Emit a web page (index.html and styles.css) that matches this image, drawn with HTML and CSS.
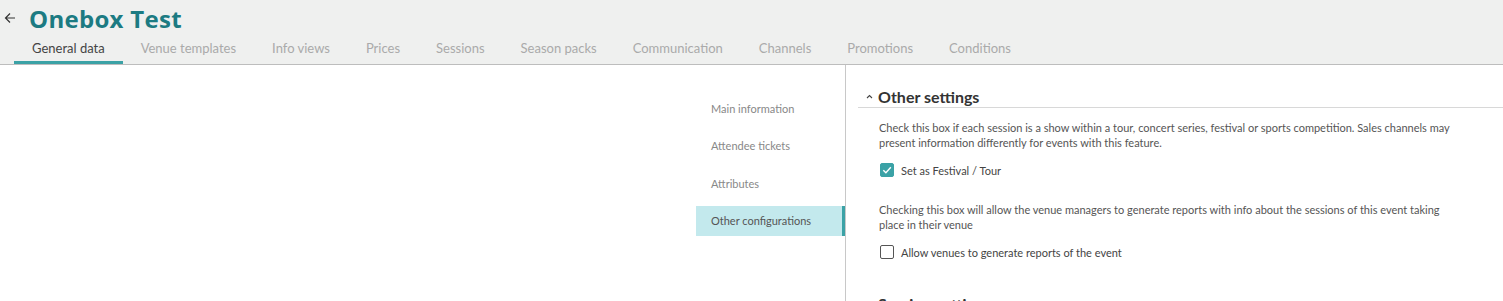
FILE: index.html
```html
<!DOCTYPE html>
<html lang="en">
<head>
  <meta charset="UTF-8" />
  <title>Onebox Test</title>
  <link rel="stylesheet" href="styles.css">
</head>
<body>
  <header class="top">
    <div class="title-row">
      <svg class="back" width="12" height="12" viewBox="0 0 12 12">
        <path d="M11 6H1.5M6 1.5L1.5 6L6 10.5" fill="none" stroke="#333" stroke-width="1.2"/>
      </svg>
      <h1>Onebox Test</h1>
    </div>
    <nav class="tabs">
      <a class="tab active">General data</a>
      <a class="tab">Venue templates</a>
      <a class="tab">Info views</a>
      <a class="tab">Prices</a>
      <a class="tab">Sessions</a>
      <a class="tab">Season packs</a>
      <a class="tab">Communication</a>
      <a class="tab">Channels</a>
      <a class="tab">Promotions</a>
      <a class="tab">Conditions</a>
    </nav>
  </header>

  <div class="page">
    <aside class="side">
      <ul class="side-menu">
        <li>Main information</li>
        <li>Attendee tickets</li>
        <li>Attributes</li>
        <li class="active">Other configurations</li>
      </ul>
    </aside>

    <main class="content">
      <section class="block">
        <h2 class="block-title">
          <svg class="caret" width="7" height="5" viewBox="0 0 7 5"><path d="M1 4L3.5 1.5L6 4" fill="none" stroke="#444" stroke-width="1.1"/></svg>
          Other settings
        </h2>
        <div class="block-body">
          <p>Check this box if each session is a show within a tour, concert series, festival or sports competition. Sales channels may present information differently for events with this feature.</p>
          <label class="check">
            <span class="box checked">
              <svg width="10" height="10" viewBox="0 0 10 10"><path d="M1.3 5.2L3.9 7.7L8.8 2.3" fill="none" stroke="#fff" stroke-width="1.4"/></svg>
            </span>
            Set as Festival / Tour
          </label>

          <p>Checking this box will allow the venue managers to generate reports with info about the sessions of this event taking place in their venue</p>
          <label class="check">
            <span class="box"></span>
            Allow venues to generate reports of the event
          </label>
        </div>
      </section>

      <section class="block">
        <h2 class="block-title next">Session settings</h2>
      </section>
    </main>
  </div>
</body>
</html>
```

FILE: styles.css
```css
* {
  box-sizing: border-box;
}

html, body {
  margin: 0;
  padding: 0;
  height: 100vh;
  overflow: hidden;
  background: #fff;
  font-family: 'Lato', sans-serif;
  color: #555;
}

.top {
  background: #eff0ef;
  border-bottom: 1px solid #bdbdbd;
  height: 65px;
}

.title-row {
  display: flex;
  align-items: center;
  height: 36px;
  padding-left: 4px;
}

.back {
  margin-right: 13px;
}

h1 {
  margin: 0;
  font-family: 'Open Sans', sans-serif;
  font-weight: 700;
  font-size: 24px;
  color: #1c7b82;
  letter-spacing: 0.3px;
}

.tabs {
  display: flex;
  padding-left: 14px;
  height: 28px;
}

.tab {
  display: flex;
  align-items: center;
  padding: 0 18px 1px;
  font-size: 13px;
  color: #aaa;
  border-bottom: 3px solid transparent;
}

.tab.active {
  color: #444;
  border-bottom-color: #3ba2a6;
}

.page {
  display: flex;
  height: calc(100vh - 65px);
}

.side {
  width: 846px;
  padding-left: 696px;
  border-right: 1px solid #c8c8c8;
}

.side-menu {
  list-style: none;
  margin: 0;
  padding: 28px 0 0;
  display: flex;
  flex-direction: column;
  gap: 7.6px;
}

.side-menu li {
  height: 30px;
  display: flex;
  align-items: center;
  padding-left: 15px;
  font-size: 11px;
  color: #888;
  border-right: 3px solid transparent;
}

.side-menu li.active {
  background: #c3e9ed;
  color: #555;
  border-right-color: #3ba2a6;
}

.content {
  flex: 1;
  padding: 20px 0 0 12px;
}

.block-title {
  margin: 0;
  height: 23px;
  display: flex;
  align-items: center;
  padding-left: 8px;
  font-size: 16px;
  font-weight: 700;
  color: #333;
  border-bottom: 1px solid #d8d8d8;
}

.caret {
  margin-right: 5px;
  margin-top: 1px;
}

.block-title.next {
  border-bottom: none;
  margin-top: 33px;
  padding-left: 20px;
}

.block-body {
  padding: 12px 0 0 21px;
  max-width: 600px;
}

.block-body p {
  margin: 0 0 13px;
  font-size: 11px;
  line-height: 15px;
  color: #555;
}

.check {
  display: flex;
  align-items: center;
  gap: 7px;
  height: 14px;
  margin: 0 0 25px 1px;
  font-size: 11px;
  color: #444;
}

.box {
  width: 14px;
  height: 14px;
  border: 1px solid #555;
  border-radius: 2px;
  display: flex;
  align-items: center;
  justify-content: center;
}

.box.checked {
  background: #3ba2a6;
  border-color: #3ba2a6;
}
```
